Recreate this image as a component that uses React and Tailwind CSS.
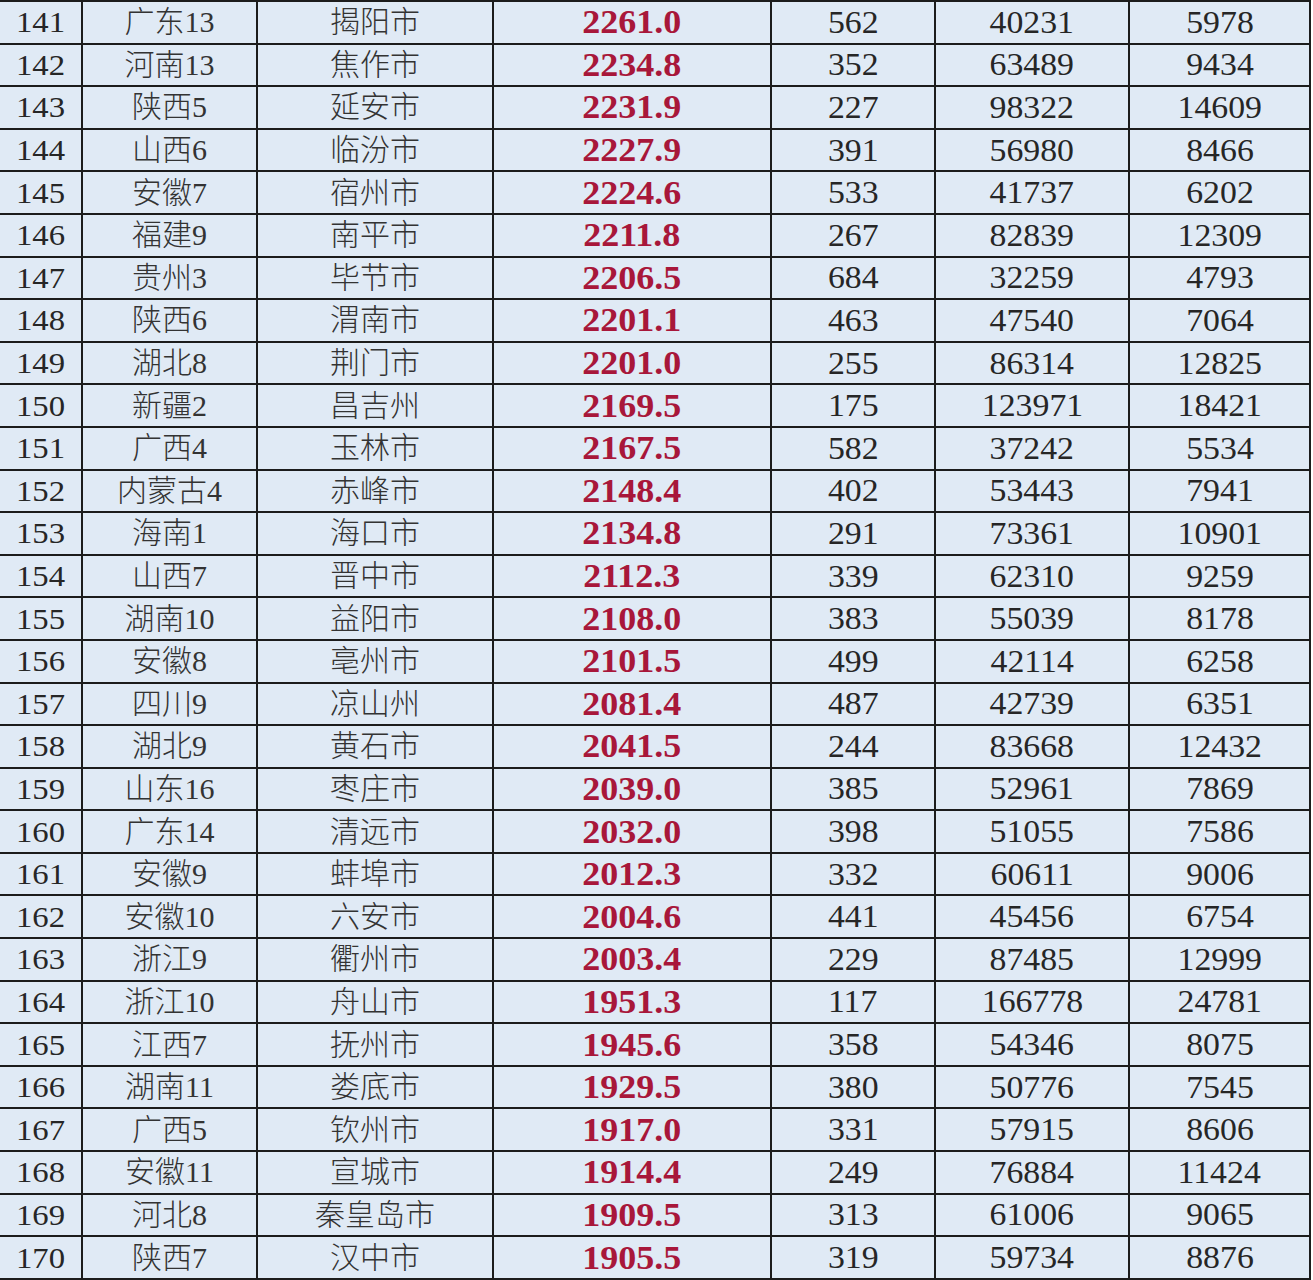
const rows = [
  ["141", "广东13", "揭阳市", "2261.0", "562", "40231", "5978"],
  ["142", "河南13", "焦作市", "2234.8", "352", "63489", "9434"],
  ["143", "陕西5", "延安市", "2231.9", "227", "98322", "14609"],
  ["144", "山西6", "临汾市", "2227.9", "391", "56980", "8466"],
  ["145", "安徽7", "宿州市", "2224.6", "533", "41737", "6202"],
  ["146", "福建9", "南平市", "2211.8", "267", "82839", "12309"],
  ["147", "贵州3", "毕节市", "2206.5", "684", "32259", "4793"],
  ["148", "陕西6", "渭南市", "2201.1", "463", "47540", "7064"],
  ["149", "湖北8", "荆门市", "2201.0", "255", "86314", "12825"],
  ["150", "新疆2", "昌吉州", "2169.5", "175", "123971", "18421"],
  ["151", "广西4", "玉林市", "2167.5", "582", "37242", "5534"],
  ["152", "内蒙古4", "赤峰市", "2148.4", "402", "53443", "7941"],
  ["153", "海南1", "海口市", "2134.8", "291", "73361", "10901"],
  ["154", "山西7", "晋中市", "2112.3", "339", "62310", "9259"],
  ["155", "湖南10", "益阳市", "2108.0", "383", "55039", "8178"],
  ["156", "安徽8", "亳州市", "2101.5", "499", "42114", "6258"],
  ["157", "四川9", "凉山州", "2081.4", "487", "42739", "6351"],
  ["158", "湖北9", "黄石市", "2041.5", "244", "83668", "12432"],
  ["159", "山东16", "枣庄市", "2039.0", "385", "52961", "7869"],
  ["160", "广东14", "清远市", "2032.0", "398", "51055", "7586"],
  ["161", "安徽9", "蚌埠市", "2012.3", "332", "60611", "9006"],
  ["162", "安徽10", "六安市", "2004.6", "441", "45456", "6754"],
  ["163", "浙江9", "衢州市", "2003.4", "229", "87485", "12999"],
  ["164", "浙江10", "舟山市", "1951.3", "117", "166778", "24781"],
  ["165", "江西7", "抚州市", "1945.6", "358", "54346", "8075"],
  ["166", "湖南11", "娄底市", "1929.5", "380", "50776", "7545"],
  ["167", "广西5", "钦州市", "1917.0", "331", "57915", "8606"],
  ["168", "安徽11", "宣城市", "1914.4", "249", "76884", "11424"],
  ["169", "河北8", "秦皇岛市", "1909.5", "313", "61006", "9065"],
  ["170", "陕西7", "汉中市", "1905.5", "319", "59734", "8876"],
];

const cell = "h-[42.6px] p-0 text-center align-middle border-2 border-[#1c1c1c]";
const serif = { fontFamily: '"Liberation Serif", "Times New Roman", "DejaVu Serif", "Noto Sans CJK SC", serif' };

function Num({ children }) {
  return <span className="inline-block scale-x-[1.09]">{children}</span>;
}

export default function App() {
  return (
    <div className="w-[1313px] h-[1280px] bg-white overflow-hidden">
      <table className="table-fixed border-collapse w-[1310px] bg-[#e0eaf5] text-[#262626] leading-none" style={serif}>
        <colgroup>
          <col className="w-[82px]" />
          <col className="w-[175px]" />
          <col className="w-[236px]" />
          <col className="w-[278px]" />
          <col className="w-[164px]" />
          <col className="w-[194px]" />
          <col className="w-[181px]" />
        </colgroup>
        <tbody>
          {rows.map((r) => (
            <tr key={r[0]}>
              <td className={`${cell} border-l-0 text-[30px]`} style={serif}><Num>{r[0]}</Num></td>
              <td className={`${cell} text-[30px] font-light text-[#333]`} style={serif}>{r[1]}</td>
              <td className={`${cell} text-[30px] font-light text-[#333]`} style={serif}>{r[2]}</td>
              <td className={`${cell} text-[34px] font-bold text-[#a8173a]`} style={serif}>
                <span className="inline-block scale-x-[1.06]">{r[3]}</span>
              </td>
              <td className={`${cell} text-[31px]`} style={serif}><Num>{r[4]}</Num></td>
              <td className={`${cell} text-[31px]`} style={serif}><Num>{r[5]}</Num></td>
              <td className={`${cell} text-[31px]`} style={serif}><Num>{r[6]}</Num></td>
            </tr>
          ))}
        </tbody>
      </table>
    </div>
  );
}
